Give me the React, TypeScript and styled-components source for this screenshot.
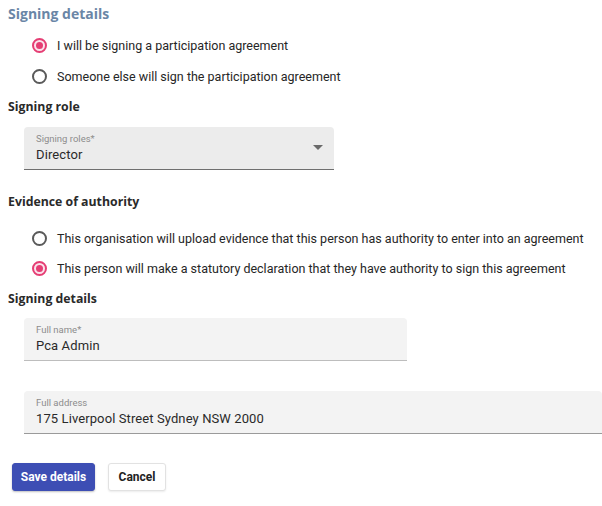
import styled, { createGlobalStyle } from "styled-components";

const GlobalStyle = createGlobalStyle`
  body {
    margin: 0;
    background: #ffffff;
    font-family: Roboto, "Liberation Sans", sans-serif;
    color: #212121;
  }
`;

const Page = styled.div`
  width: 602px;
  height: 506px;
  overflow: hidden;
  padding: 0 0 0 8px;
  box-sizing: border-box;
  display: flex;
  flex-direction: column;
`;

const Title = styled.h2`
  margin: 0;
  height: 30px;
  line-height: 28px;
  font-family: "Open Sans", "Liberation Sans", sans-serif;
  font-size: 14px;
  font-weight: 700;
  color: #6a86a6;
`;

const Heading = styled.h3<{ $top?: number }>`
  margin: ${(p) => p.$top ?? 0}px 0 0;
  height: 30px;
  line-height: 30px;
  font-family: "Open Sans", "Liberation Sans", sans-serif;
  font-size: 12.3px;
  font-weight: 700;
  color: #2a2a2a;
`;

const RadioGroup = styled.div<{ $top?: number; $row: number }>`
  margin-top: ${(p) => p.$top ?? 0}px;
  padding-left: 24px;
  display: flex;
  flex-direction: column;
  & > label {
    height: ${(p) => p.$row}px;
  }
`;

const RadioRow = styled.label`
  display: flex;
  align-items: center;
  gap: 10px;
  font-size: 12.5px;
  color: #262626;
  cursor: pointer;
`;

const RadioCircle = styled.span<{ $checked?: boolean }>`
  width: 15px;
  height: 15px;
  box-sizing: border-box;
  border-radius: 50%;
  border: 2px solid ${(p) => (p.$checked ? "#e53e74" : "#5a5a5a")};
  display: flex;
  align-items: center;
  justify-content: center;
  background: ${(p) => (p.$checked ? "#fbe3ec" : "#fff")};
  &::after {
    content: "";
    width: 7px;
    height: 7px;
    border-radius: 50%;
    background: ${(p) => (p.$checked ? "#e53e74" : "transparent")};
  }
`;

const Field = styled.div<{ $width: number; $top?: number; $bg: string; $line: string }>`
  position: relative;
  margin: ${(p) => p.$top ?? 0}px 0 0 16px;
  width: ${(p) => p.$width}px;
  height: 43px;
  box-sizing: border-box;
  padding: 6px 12px 0;
  background: ${(p) => p.$bg};
  border-radius: 4px 4px 0 0;
  border-bottom: 1.5px solid ${(p) => p.$line};
  display: flex;
  flex-direction: column;
`;

const FieldLabel = styled.span`
  font-size: 9.5px;
  line-height: 12px;
  color: #8c8c8c;
`;

const FieldValue = styled.span`
  margin-top: 1px;
  font-size: 13px;
  line-height: 17px;
  color: #2a2a2a;
  letter-spacing: 0.1px;
`;

const Caret = styled.span`
  position: absolute;
  right: 11px;
  top: 18px;
  width: 0;
  height: 0;
  border-left: 5px solid transparent;
  border-right: 5px solid transparent;
  border-top: 5px solid #6a6a6a;
`;

const Actions = styled.div`
  margin: 29px 0 0 4px;
  display: flex;
  gap: 13px;
`;

const Button = styled.button<{ $primary?: boolean; $width: number }>`
  width: ${(p) => p.$width}px;
  height: 28px;
  padding: 0;
  border-radius: 3px;
  font-family: Roboto, "Liberation Sans", sans-serif;
  font-size: 12px;
  font-weight: 700;
  cursor: pointer;
  color: ${(p) => (p.$primary ? "#ffffff" : "#222222")};
  background: ${(p) => (p.$primary ? "#3d4eb4" : "#ffffff")};
  border: 1px solid ${(p) => (p.$primary ? "#3d4eb4" : "#e2e2e2")};
  box-shadow: ${(p) => (p.$primary ? "0 1px 2px rgba(0,0,0,0.25)" : "0 1px 2px rgba(0,0,0,0.08)")};
`;

function Radio({ checked, label }: { checked?: boolean; label: string }) {
  return (
    <RadioRow>
      <RadioCircle $checked={checked} />
      {label}
    </RadioRow>
  );
}

export default function App() {
  return (
    <Page>
      <GlobalStyle />
      <Title>Signing details</Title>
      <RadioGroup $row={31}>
        <Radio checked label="I will be signing a participation agreement" />
        <Radio label="Someone else will sign the participation agreement" />
      </RadioGroup>

      <Heading>Signing role</Heading>
      <Field $width={310} $top={5} $bg="#ececec" $line="#6f6f6f">
        <FieldLabel>Signing roles*</FieldLabel>
        <FieldValue>Director</FieldValue>
        <Caret />
      </Field>

      <Heading $top={17}>Evidence of authority</Heading>
      <RadioGroup $top={6} $row={30}>
        <Radio label="This organisation will upload evidence that this person has authority to enter into an agreement" />
        <Radio checked label="This person will make a statutory declaration that they have authority to sign this agreement" />
      </RadioGroup>

      <Heading $top={1}>Signing details</Heading>
      <Field $width={383} $top={4} $bg="#f3f3f3" $line="#bdbdbd">
        <FieldLabel>Full name*</FieldLabel>
        <FieldValue>Pca Admin</FieldValue>
      </Field>
      <Field $width={578} $top={30} $bg="#f3f3f3" $line="#9a9a9a">
        <FieldLabel>Full address</FieldLabel>
        <FieldValue>175 Liverpool Street Sydney NSW 2000</FieldValue>
      </Field>

      <Actions>
        <Button $primary $width={83}>Save details</Button>
        <Button $width={58}>Cancel</Button>
      </Actions>
    </Page>
  );
}
